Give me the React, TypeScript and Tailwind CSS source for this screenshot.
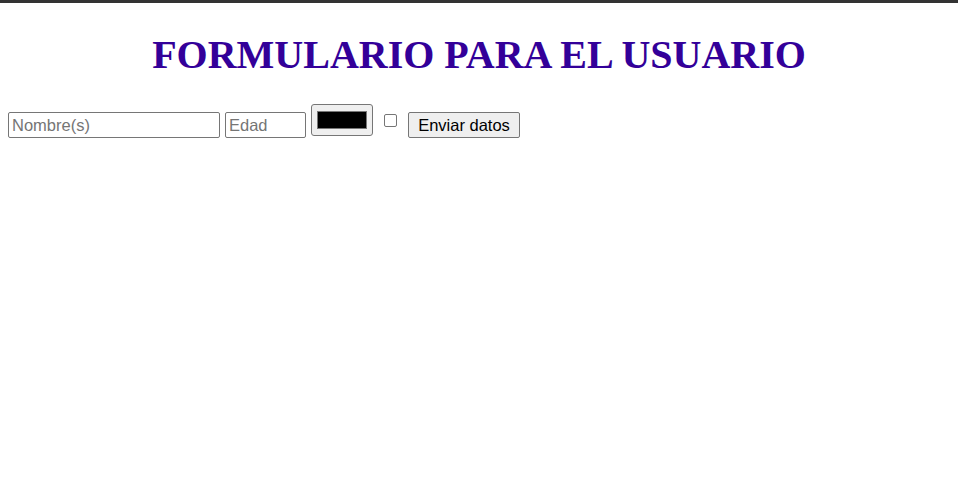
export default function App() {
  return (
    <div className="min-h-[493px] bg-white font-['Liberation_Sans',Arial,sans-serif]">
      <div className="h-[3px] bg-[#333333]" />

      <h1 className="mt-[29px] text-center font-['Liberation_Serif','Times_New_Roman',serif] text-[40px] font-bold leading-[46px] text-[#330099]">
        FORMULARIO PARA EL USUARIO
      </h1>

      <form className="mt-[26px] flex items-start px-2">
        <input
          type="text"
          placeholder="Nombre(s)"
          className="mt-2 h-[26px] w-[212px] rounded-[2px] border border-[#767676] px-[3px] text-[16.5px] text-black placeholder:text-[#757575]"
        />
        <input
          type="number"
          placeholder="Edad"
          className="mt-2 ml-[5px] h-[26px] w-[81px] rounded-[2px] border border-[#767676] px-[3px] text-[16.5px] text-black placeholder:text-[#757575]"
        />
        <div className="ml-[5px] flex h-[32px] w-[62px] items-center justify-center rounded-[3px] border border-[#767676] bg-[#efefef]">
          <div className="h-[18px] w-[50px] border border-[#777777] bg-black" />
        </div>
        <input
          type="checkbox"
          className="mt-[10px] ml-[11px] h-[13px] w-[13px] appearance-none rounded-[2px] border border-[#767676] bg-white"
        />
        <button
          type="button"
          className="mt-2 ml-[11px] h-[26px] w-[112px] rounded-[2px] border border-[#767676] bg-[#efefef] text-[16.5px] leading-[24px] text-black"
        >
          Enviar datos
        </button>
      </form>
    </div>
  );
}
